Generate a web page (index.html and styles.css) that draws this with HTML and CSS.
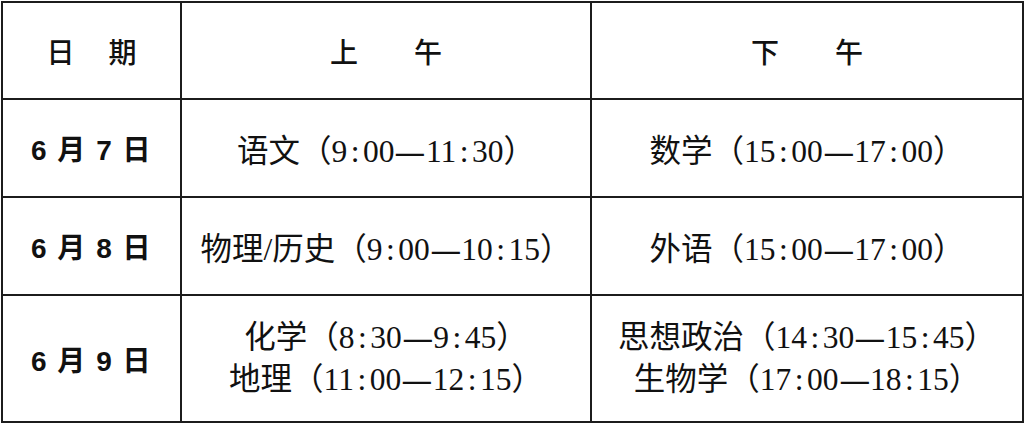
FILE: index.html
```html
<!DOCTYPE html>
<html lang="zh-CN">
<head>
<meta charset="utf-8">
<link rel="stylesheet" href="styles.css">
</head>
<body>
<table class="schedule">
  <colgroup>
    <col class="c-date">
    <col class="c-am">
    <col class="c-pm">
  </colgroup>
  <tr class="r-head">
    <th class="h-date">日　期</th>
    <th>上　　午</th>
    <th>下　　午</th>
  </tr>
  <tr class="r-day">
    <td class="date">6 月 7 日</td>
    <td>语文（9<span class="col">:</span>00<span class="dash">—</span>11<span class="col">:</span>30）</td>
    <td>数学（15<span class="col">:</span>00<span class="dash">—</span>17<span class="col">:</span>00）</td>
  </tr>
  <tr class="r-day">
    <td class="date">6 月 8 日</td>
    <td>物理/历史（9<span class="col">:</span>00<span class="dash">—</span>10<span class="col">:</span>15）</td>
    <td>外语（15<span class="col">:</span>00<span class="dash">—</span>17<span class="col">:</span>00）</td>
  </tr>
  <tr class="r-last">
    <td class="date">6 月 9 日</td>
    <td><div class="line">化学（8<span class="col">:</span>30<span class="dash">—</span>9<span class="col">:</span>45）</div><div class="line">地理（11<span class="col">:</span>00<span class="dash">—</span>12<span class="col">:</span>15）</div></td>
    <td><div class="line">思想政治（14<span class="col">:</span>30<span class="dash">—</span>15<span class="col">:</span>45）</div><div class="line">生物学（17<span class="col">:</span>00<span class="dash">—</span>18<span class="col">:</span>15）</div></td>
  </tr>
</table>
</body>
</html>
```
FILE: styles.css
```css
html, body {
  margin: 0;
  padding: 0;
  background: #ffffff;
}
.schedule {
  border-collapse: collapse;
  table-layout: fixed;
  width: 1023px;
  margin: 1px 0 0 1px;
  color: #111111;
  font-family: "Liberation Serif", "Noto Sans CJK SC", serif;
  font-size: 31.5px;
}
.c-date { width: 179px; }
.c-am { width: 410px; }
.c-pm { width: 432px; }
.schedule th,
.schedule td {
  border: 2px solid #1c1c1c;
  text-align: center;
  vertical-align: middle;
  padding: 0;
  white-space: nowrap;
}
.schedule th {
  font-family: "Noto Sans CJK SC", sans-serif;
  font-weight: 500;
  font-size: 28px;
}
.h-date {
  letter-spacing: 3px;
  text-indent: 3px;
}
.r-head { height: 97px; }
.r-day { height: 98px; }
.r-last { height: 127px; }
.date {
  font-family: "Liberation Sans", "Noto Sans CJK SC", sans-serif;
  font-weight: 700;
  font-size: 28px;
  letter-spacing: 1.5px;
}
.line {
  line-height: 42px;
}
.col {
  display: inline-block;
  width: 0.5em;
  text-align: center;
}
.dash {
  display: inline-block;
  width: 1em;
  text-align: center;
  font-weight: 700;
  transform: scaleX(0.88);
}
```
